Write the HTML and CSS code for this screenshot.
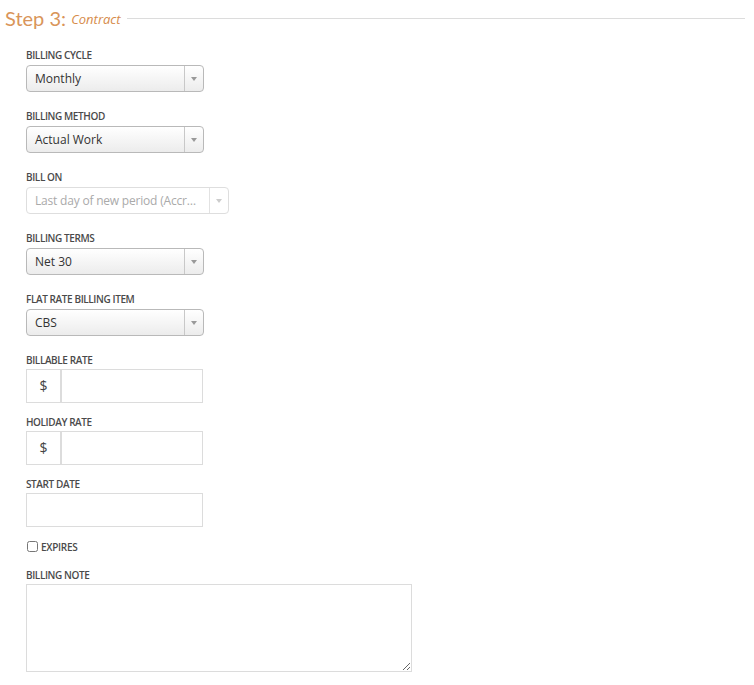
FILE: index.html
```html
<!DOCTYPE html>
<html lang="en">
<head>
    <meta charset="UTF-8">
    <title>Step 3: Contract</title>
    <link rel="stylesheet" href="styles.css">
</head>
<body>
    <h2 class="step-title">Step 3: <em>Contract</em></h2>

    <form class="contract-form">
        <div class="field">
            <label>Billing Cycle</label>
            <div class="select">
                <span class="select-value">Monthly</span>
                <span class="select-arrow"></span>
            </div>
        </div>

        <div class="field">
            <label>Billing Method</label>
            <div class="select">
                <span class="select-value">Actual Work</span>
                <span class="select-arrow"></span>
            </div>
        </div>

        <div class="field">
            <label>Bill On</label>
            <div class="select select-wide disabled">
                <span class="select-value">Last day of new period (Accr…</span>
                <span class="select-arrow"></span>
            </div>
        </div>

        <div class="field">
            <label>Billing Terms</label>
            <div class="select">
                <span class="select-value">Net 30</span>
                <span class="select-arrow"></span>
            </div>
        </div>

        <div class="field">
            <label>Flat Rate Billing Item</label>
            <div class="select">
                <span class="select-value">CBS</span>
                <span class="select-arrow"></span>
            </div>
        </div>

        <div class="field field-input">
            <label>Billable Rate</label>
            <div class="input-group">
                <span class="addon">$</span>
                <input type="text">
            </div>
        </div>

        <div class="field field-input">
            <label>Holiday Rate</label>
            <div class="input-group">
                <span class="addon">$</span>
                <input type="text">
            </div>
        </div>

        <div class="field field-input">
            <label>Start Date</label>
            <input type="text" class="text-input">
        </div>

        <div class="checkbox-row">
            <input type="checkbox" id="expires">
            <label for="expires">Expires</label>
        </div>

        <div class="field field-note">
            <label>Billing Note</label>
            <textarea></textarea>
        </div>
    </form>
</body>
</html>
```

FILE: styles.css
```css
body {
    margin: 0;
    padding: 3px 9px 0 5px;
    background-color: #fff;
    font-family: "Open Sans", "Liberation Sans", sans-serif;
    color: #333;
}
.step-title {
    display: flex;
    align-items: center;
    margin: 0 0 15px;
    font-family: "Lato", "Noto Sans", sans-serif;
    font-size: 20px;
    font-weight: 400;
    line-height: 27px;
    color: #d9955a;
    white-space: pre;
}
.step-title em {
    font-family: "Open Sans", sans-serif;
    font-size: 13px;
    font-style: italic;
    color: #d68b4a;
    padding-top: 3px;
}
.step-title::after {
    content: "";
    flex: 1;
    border-top: 1px solid #dcdcdc;
    margin-left: 6px;
    margin-top: 0;
}
.contract-form {
    padding-left: 21px;
}
.field {
    margin-bottom: 17px;
}
.field label {
    display: block;
    font-size: 10px;
    font-weight: 600;
    line-height: 14px;
    letter-spacing: -0.4px;
    text-transform: uppercase;
    color: #4a4a4a;
    margin-bottom: 3px;
}
.select {
    display: flex;
    width: 178px;
    height: 27px;
    box-sizing: border-box;
    border: 1px solid #b9b9b9;
    border-radius: 4px;
    background: linear-gradient(#ffffff, #ececec);
    font-size: 12px;
    color: #333;
}
.select-wide {
    width: 203px;
}
.select-value {
    flex: 1;
    padding: 0 8px;
    line-height: 25px;
    overflow: hidden;
    white-space: nowrap;
}
.select-arrow {
    width: 18px;
    border-left: 1px solid #c8c8c8;
    position: relative;
}
.select-arrow::after {
    content: "";
    position: absolute;
    left: 6px;
    top: 11px;
    border-left: 3px solid transparent;
    border-right: 3px solid transparent;
    border-top: 4px solid #999;
}
.select.disabled {
    border-color: #dedede;
    background: #fff;
    color: #aaa;
}
.select.disabled .select-value {
    letter-spacing: -0.2px;
}
.select.disabled .select-arrow {
    border-left-color: #e2e2e2;
}
.select.disabled .select-arrow::after {
    border-top-color: #ccc;
}
.field-input {
    margin-bottom: 12px;
}
.field-input label {
    margin-bottom: 2px;
}
.input-group {
    display: flex;
    width: 177px;
    height: 34px;
    box-sizing: border-box;
    border: 1px solid #dcdcdc;
}
.addon {
    width: 33px;
    border-right: 2px solid #dcdcdc;
    text-align: center;
    line-height: 32px;
    font-size: 14px;
    color: #444;
}
.input-group input {
    flex: 1;
    min-width: 0;
    border: none;
    padding: 0 6px;
    outline: none;
}
.text-input {
    display: block;
    width: 177px;
    height: 34px;
    box-sizing: border-box;
    border: 1px solid #dcdcdc;
    padding: 0 6px;
}
.checkbox-row {
    display: flex;
    align-items: center;
    height: 13px;
    margin: 13px 0 15px;
}
.checkbox-row input {
    width: 11px;
    height: 11px;
    margin: 0 3px 0 1px;
}
.checkbox-row label {
    font-size: 10px;
    font-weight: 600;
    letter-spacing: -0.3px;
    text-transform: uppercase;
    color: #4a4a4a;
}
.field-note label {
    margin-bottom: 2px;
}
.field-note textarea {
    display: block;
    width: 386px;
    height: 88px;
    box-sizing: border-box;
    border: 1px solid #dcdcdc;
    resize: both;
}
```
